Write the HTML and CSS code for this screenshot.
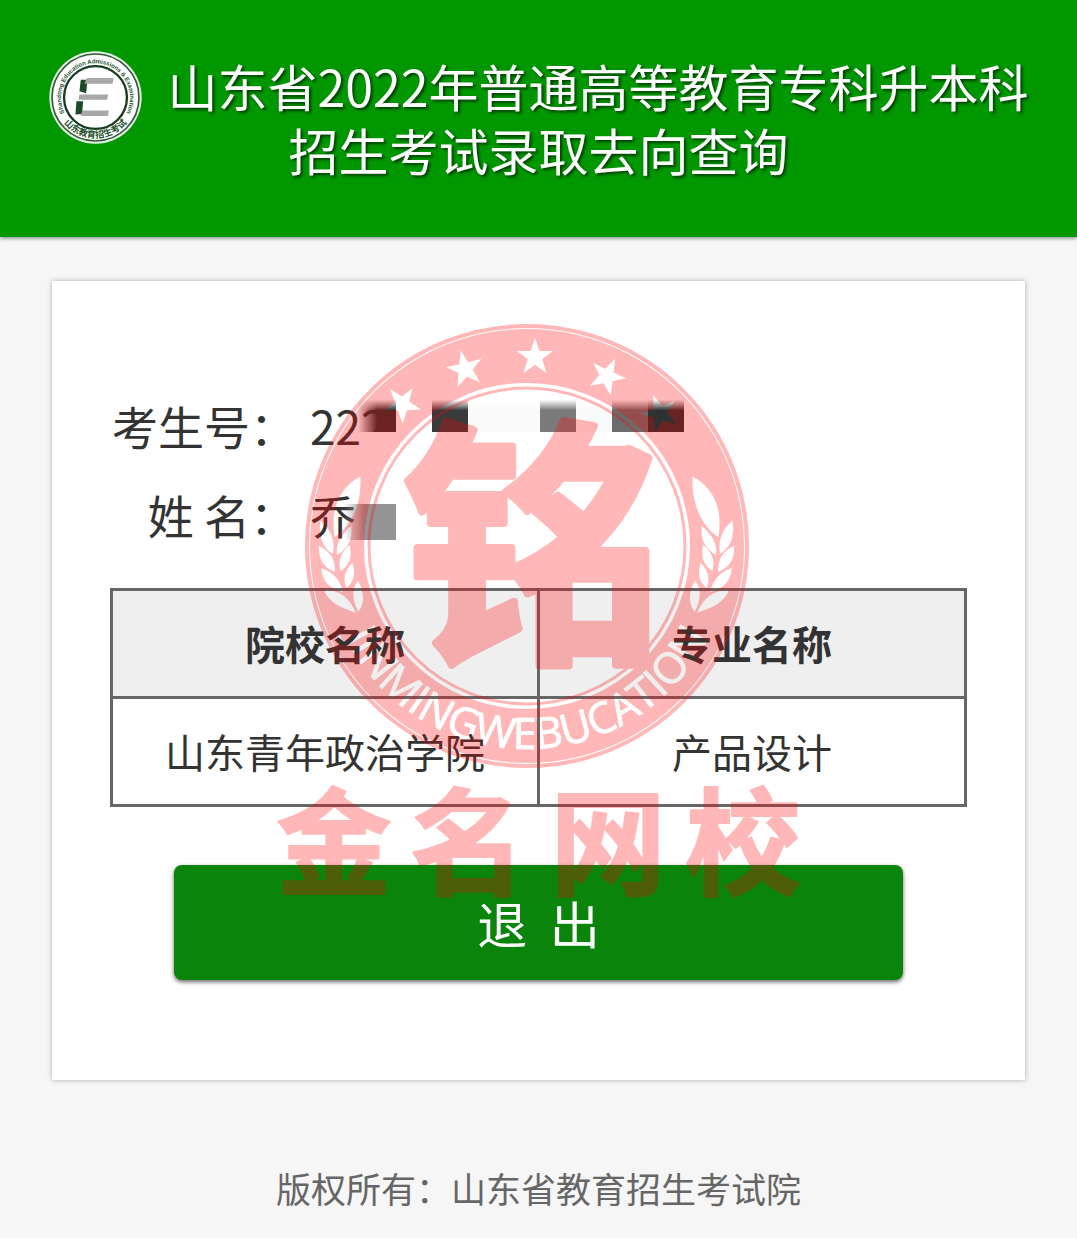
FILE: index.html
```html
<!DOCTYPE html>
<html lang="zh-CN">
<head>
    <meta charset="UTF-8">
    <meta name="viewport" content="width=device-width, initial-scale=1.0">
    <title>山东省2022年普通高等教育专科升本科招生考试录取去向查询</title>
    <link rel="stylesheet" href="styles.css">
</head>
<body>
    <header>
        <h1>
            <svg class="logo" viewBox="0 0 278 278" aria-hidden="true">
                <defs>
                    <path id="logoTop" d="M 48 188 A 103 103 0 1 1 230 188"/>
                    <path id="logoBottom" d="M 22 170 A 121 121 0 0 0 256 170"/>
                </defs>
                <circle cx="139" cy="139" r="138" fill="#e8f3e8"/>
                <circle cx="139" cy="139" r="130" fill="#fff" stroke="#2f5a35" stroke-width="5"/>
                <circle cx="139" cy="139" r="94" fill="#fff" stroke="#173d20" stroke-width="7"/>
                <text class="logo-en"><textPath href="#logoTop" startOffset="50%">Shandong Education Admissions &amp; Examination</textPath></text>
                <text class="logo-cn"><textPath href="#logoBottom" startOffset="50%">山东教育招生考试</textPath></text>
                <path fill="#1d4a28" d="M95 86h20l-4 40-20-6zM82 150h20l-3 38-20 2z"/>
                <path fill="#a8a8a8" d="M113 81h80l-3 17h-84zM91 130h86l-3 16h-86zM100 178h79l-3 16h-82z"/>
            </svg>山东省2022年普通高等教育专科升本科<br>招生考试录取去向查询
        </h1>
    </header>

    <main class="card">
        <dl class="info">
            <dt>考生号：</dt>
            <dd>
                222
                <svg class="cover cover-number" viewBox="0 0 330 52" aria-hidden="true">
                    <defs>
                        <linearGradient id="fadeDown" x1="0" y1="0" x2="0" y2="1">
                            <stop offset="0.1" stop-color="#fff"/>
                            <stop offset="0.4" stop-color="#fff" stop-opacity="0"/>
                        </linearGradient>
                        <linearGradient id="fadeNumber" x1="0" y1="0" x2="1" y2="0">
                            <stop offset="0" stop-color="#303030" stop-opacity="0"/>
                            <stop offset="0.5" stop-color="#303030"/>
                        </linearGradient>
                    </defs>
                    <rect x="4" y="36" width="34" height="16" fill="#fff"/>
                    <rect x="0" y="0" width="38" height="36" fill="url(#fadeNumber)"/>
                    <rect x="74" y="0" width="36" height="36" fill="#3a3a3a"/>
                    <rect x="110" y="0" width="144" height="36" fill="#fafafa"/>
                    <rect x="182" y="0" width="36" height="36" fill="#7a7a7a"/>
                    <rect x="254" y="0" width="36" height="36" fill="#6c6c6c"/>
                    <rect x="290" y="0" width="36" height="36" fill="#2f3232"/>
                    <rect x="0" y="0" width="330" height="36" fill="url(#fadeDown)"/>
                </svg>
            </dd>
            <dt>姓 名：</dt>
            <dd>
                乔
                <svg class="cover cover-name" viewBox="0 0 52 36" aria-hidden="true">
                    <defs>
                        <linearGradient id="fadeName" x1="0" y1="0" x2="1" y2="0">
                            <stop offset="0" stop-color="#949494" stop-opacity="0"/>
                            <stop offset="0.4" stop-color="#949494"/>
                        </linearGradient>
                    </defs>
                    <rect x="0" y="0" width="52" height="36" fill="url(#fadeName)"/>
                </svg>
            </dd>
        </dl>

        <table>
            <thead>
                <tr>
                    <th>院校名称</th>
                    <th>专业名称</th>
                </tr>
            </thead>
            <tbody>
                <tr>
                    <td>山东青年政治学院</td>
                    <td>产品设计</td>
                </tr>
            </tbody>
        </table>

        <button type="button" class="btn-exit">退&nbsp;&nbsp;出</button>

        <svg class="watermark" viewBox="268 320 540 584" aria-hidden="true">
            <defs>
                <path id="star" d="M0-19 4.500-6H18L7.200 2.300 11.500 16 0 8-11.500 16-7.200 2.300-18-6H-4.500z"/>
                <path id="ringText" d="M 324 546 A 203 203 0 0 0 730 546"/>
                <g id="wheat">
                    <path d="M1208 500C1262 525 1302 590 1285 682C1240 650 1203 590 1208 500z"/>
                    <path d="M1328 632C1335 680 1322 712 1290 732C1283 690 1298 655 1328 632z"/>
                    <path d="M1235 648C1262 670 1284 700 1278 735C1245 715 1231 690 1235 648z"/>
                    <path d="M1333 707C1334 750 1316 775 1284 785C1284 745 1300 722 1333 707z"/>
                    <path d="M1240 705C1262 722 1278 750 1267 783C1240 765 1232 740 1240 705z"/>
                    <path d="M1325 775C1324 810 1302 838 1260 846C1270 810 1290 785 1325 775z"/>
                    <path d="M1232 758C1254 780 1262 805 1250 834C1226 815 1222 790 1232 758z"/>
                    <path d="M1318 838C1304 876 1272 892 1222 908C1240 865 1270 840 1318 838z"/>
                    <path d="M1215 812C1236 838 1232 870 1214 905C1194 880 1196 845 1215 812z"/>
                </g>
                <mask id="ringMask" maskUnits="userSpaceOnUse" x="300" y="320" width="460" height="460">
                    <rect x="300" y="320" width="460" height="460" fill="#fff"/>
                    <use href="#star" transform="translate(402 404) rotate(-38)"/>
                    <use href="#star" transform="translate(465 369) rotate(-13)"/>
                    <use href="#star" transform="translate(535 357)"/>
                    <use href="#star" transform="translate(607 376) rotate(25)"/>
                    <use href="#star" transform="translate(660 413) rotate(-21)"/>
                    <use href="#wheat" transform="translate(290 310) scale(0.3333)"/>
                    <use href="#wheat" transform="translate(763 310) scale(-0.3333 0.3333)"/>
                    <text class="ring-text"><textPath href="#ringText" startOffset="50%">JINMINGWEBUCATION</textPath></text>
                </mask>
            </defs>
            <g class="ring">
                <circle cx="527" cy="546" r="220" stroke-width="4"/>
                <circle cx="527" cy="546" r="190" stroke-width="54" mask="url(#ringMask)"/>
                <circle cx="527" cy="546" r="158" stroke-width="3"/>
            </g>
            <text class="seal" x="533" y="642">铭</text>
            <text class="brand" x="334 468 608 743" y="886">金名网校</text>
        </svg>
    </main>

    <footer>
        <p>版权所有：山东省教育招生考试院</p>
    </footer>
</body>
</html>
```
FILE: styles.css
```css
* {
    box-sizing: border-box;
}

body {
    font-family: 'Noto Sans CJK SC', sans-serif;
    margin: 0;
    padding: 0;
    background-color: #f6f6f6;
    color: #333;
}

header {
    background-color: #009700;
    color: white;
    text-align: center;
    padding: 53px 20px 56px;
    box-shadow: 0 1px 4px rgba(0, 0, 0, 0.5);
}

h1 {
    margin: 0;
    font-size: 50px;
    font-weight: normal;
    line-height: 64px;
    text-shadow: 2px 2px 3px rgba(0, 0, 0, 0.6);
}

.logo {
    width: 93px;
    height: 93px;
    margin: -20px 26px -28px 0;
    vertical-align: middle;
}

.logo text {
    text-anchor: middle;
    font-weight: bold;
    fill: #24502c;
    text-shadow: none;
}

.logo-en {
    font-family: 'Liberation Sans', sans-serif;
    font-size: 18px;
}

.logo-cn {
    font-size: 27px;
}

.card {
    position: relative;
    margin: 44px 52px 0;
    padding: 100px 58px;
    background-color: white;
    box-shadow: 0 0 5px rgba(0, 0, 0, 0.3);
}

.info {
    display: grid;
    grid-template-columns: 186px 1fr;
    column-gap: 14px;
    margin: 0 0 29px;
    font-size: 46px;
    line-height: 89px;
}

.info dt {
    text-align: right;
    white-space: nowrap;
}

.info dd {
    position: relative;
    margin: 0;
}

/* hides the private part of a value */
.cover {
    position: absolute;
}

.cover-number {
    left: 48px;
    top: 15px;
    width: 330px;
    height: 52px;
}

.cover-name {
    left: 34px;
    top: 34px;
    width: 52px;
    height: 36px;
}

table {
    width: 100%;
    border-collapse: collapse;
    table-layout: fixed;
    font-size: 40px;
    line-height: 60px;
}

th,
td {
    padding: 22px 0 23px;
    border: 3px solid #666;
    text-align: center;
}

th {
    background-color: #efefef;
}

.btn-exit {
    display: block;
    width: 85%;
    margin: 58px auto 0;
    padding: 20px 0;
    border: none;
    border-radius: 8px;
    background-color: #0a840a;
    box-shadow: 0 2px 4px rgba(0, 0, 0, 0.6);
    color: white;
    font-family: inherit;
    font-size: 50px;
    line-height: 75px;
    cursor: pointer;
}

.watermark {
    position: absolute;
    top: 39px;
    left: calc(50% - 271px);
    width: 540px;
    height: 584px;
    overflow: visible;
    opacity: 0.28;
    fill: #f00;
    pointer-events: none;
}

.watermark mask use,
.watermark mask text {
    fill: #000;
}

.ring {
    fill: none;
    stroke: #f00;
}

.ring-text {
    font-family: 'Open Sans', sans-serif;
    font-size: 43px;
    text-anchor: middle;
    stroke: #000;
    stroke-width: 1px;
}

.seal,
.brand {
    font-weight: bold;
    text-anchor: middle;
    stroke: #f00;
    stroke-linejoin: round;
}

.seal {
    font-size: 260px;
    stroke-width: 8px;
}

.brand {
    font-size: 116px;
    stroke-width: 2px;
}

footer {
    padding: 82px 20px 22px;
    color: #666;
    text-align: center;
    font-size: 35px;
    line-height: 52px;
}

footer p {
    margin: 0;
}
```
